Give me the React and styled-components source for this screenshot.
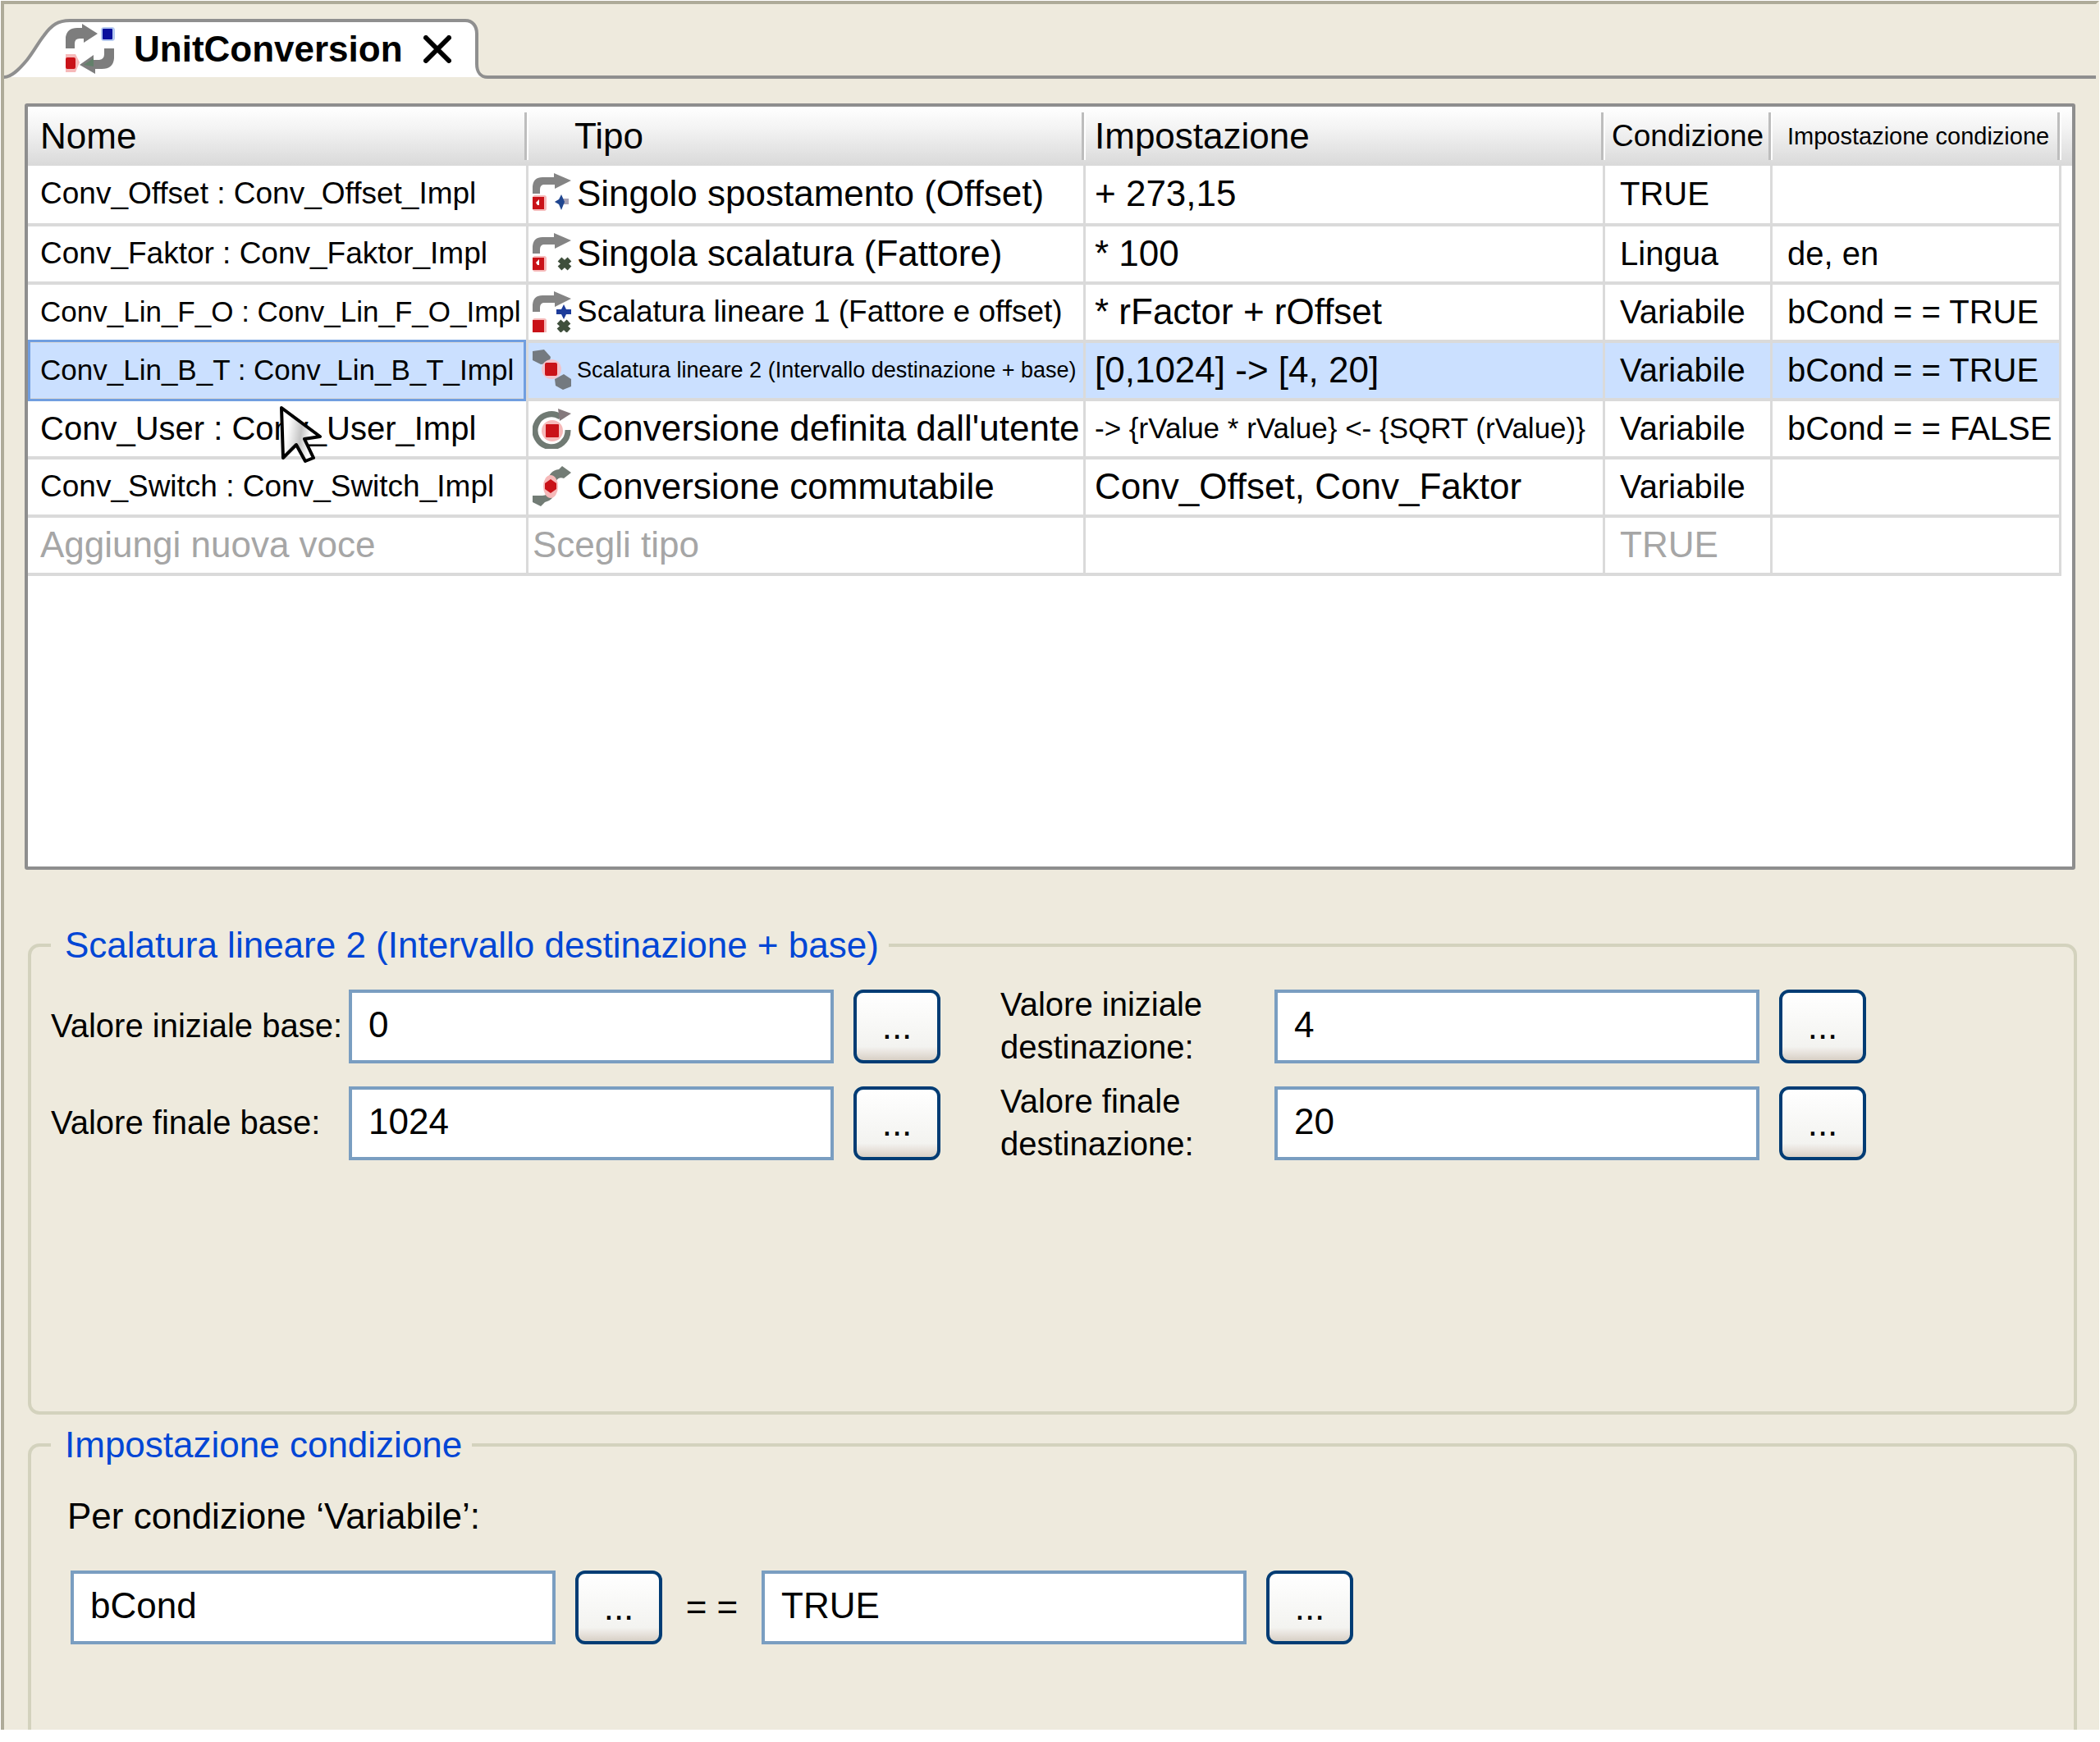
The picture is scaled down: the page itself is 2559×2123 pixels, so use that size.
import React, { useState } from "react";
import styled, { createGlobalStyle, css } from "styled-components";

const ROWS = [
  {
    name: "Conv_Offset : Conv_Offset_Impl",
    nameFit: "compact",
    icon: "offset",
    type: "Singolo spostamento (Offset)",
    setting: "+ 273,15",
    condition: "TRUE",
    conditionSetting: "",
  },
  {
    name: "Conv_Faktor : Conv_Faktor_Impl",
    nameFit: "compact",
    icon: "factor",
    type: "Singola scalatura (Fattore)",
    setting: "* 100",
    condition: "Lingua",
    conditionSetting: "de, en",
  },
  {
    name: "Conv_Lin_F_O : Conv_Lin_F_O_Impl",
    nameFit: "dense",
    icon: "linear1",
    type: "Scalatura lineare 1 (Fattore e offset)",
    typeFit: "compact",
    setting: "* rFactor + rOffset",
    condition: "Variabile",
    conditionSetting: "bCond = = TRUE",
  },
  {
    name: "Conv_Lin_B_T : Conv_Lin_B_T_Impl",
    nameFit: "dense",
    icon: "linear2",
    type: "Scalatura lineare 2 (Intervallo destinazione + base)",
    typeFit: "tiny",
    setting: "[0,1024] -> [4, 20]",
    condition: "Variabile",
    conditionSetting: "bCond = = TRUE",
  },
  {
    name: "Conv_User : Conv_User_Impl",
    nameFit: "medium",
    icon: "user",
    type: "Conversione definita dall'utente",
    setting: "-> {rValue * rValue} <- {SQRT (rValue)}",
    settingFit: "dense",
    condition: "Variabile",
    conditionSetting: "bCond = = FALSE",
  },
  {
    name: "Conv_Switch : Conv_Switch_Impl",
    nameFit: "compact",
    icon: "switch",
    type: "Conversione commutabile",
    setting: "Conv_Offset, Conv_Faktor",
    condition: "Variabile",
    conditionSetting: "",
  },
];

const BASE_FIELDS = [
  { id: "base-start", label: "Valore iniziale base:", value: "0", wide: true },
  { id: "target-start", label: "Valore iniziale destinazione:", value: "4" },
  { id: "base-end", label: "Valore finale base:", value: "1024", wide: true },
  { id: "target-end", label: "Valore finale destinazione:", value: "20" },
];

const GREY = "#848484";
const RED = "#c91218";
const PINK = "#f6b9b9";
const GREEN = "#3f4f3c";

const BendArrow = () => (
  <path
    d="M0 25 V16 Q1 5 12 5 H26 V0 L47 9 L27 19 V14 H13 Q9 15 9 20 V25 Z"
    fill={GREY}
  />
);

const RedBox = ({ y, mark }) => (
  <>
    <rect x="0" y={y - 2} width="17" height="19" rx="3" fill={PINK} />
    <rect x="0" y={y} width="14" height="15" fill={RED} />
    {mark && <path d="M4 36 L8 32 V39 H6 Z" fill="#fff" />}
  </>
);

const Plus = ({ x, y }) => (
  <path
    d={`M${x} ${y - 9} L${x + 3} ${y - 3} H${x + 9} V${y + 3} H${x + 3} L${x} ${y + 9} L${x - 3} ${y + 3} H${x - 9} V${y - 3} H${x - 3} Z`}
    fill="#1d3c9a"
  />
);

const Cross = ({ x, y }) => (
  <path
    d={`M${x - 6} ${y - 5} L${x + 6} ${y + 6} M${x + 6} ${y - 5} L${x - 6} ${y + 6}`}
    stroke={GREEN}
    strokeWidth="7"
  />
);

const TypeIcon = ({ kind }) => (
  <IconSvg viewBox="0 0 48 50" aria-hidden="true">
    {kind === "offset" && (
      <>
        <BendArrow />
        <RedBox y={29} mark />
        <path d="M27 35 L34 31 H44 V38 H34 Z" fill="#a7a2b5" />
        <path d="M35 26 L39 35 L35 45 L32 38 L27 35 L32 32 Z" fill="#1f4690" />
      </>
    )}
    {kind === "factor" && (
      <>
        <BendArrow />
        <RedBox y={30} mark />
        <Cross x={39} y={37} />
      </>
    )}
    {kind === "linear1" && (
      <>
        <BendArrow />
        <RedBox y={35} />
        <Plus x={38} y={25} />
        <Cross x={38} y={42} />
      </>
    )}
    {kind === "linear2" && (
      <>
        <path d="M0 2 L14 0 L22 9 L20 17 L10 18 L0 13 Z" fill="#747a80" />
        <path d="M27 36 L38 30 L47 36 V45 L37 49 L28 44 Z" fill="#747a80" />
        <circle cx="23" cy="24" r="12" fill="#f3c3cb" />
        <rect x="15" y="16" width="15" height="16" rx="2" fill={RED} />
      </>
    )}
    {kind === "user" && (
      <>
        <path
          d="M34 11 A20 20 0 1 0 43 27"
          fill="none"
          stroke="#707a73"
          strokeWidth="7"
        />
        <path d="M31 1 L47 7 L33 16 Z" fill="#84797c" />
        <circle cx="24" cy="28" r="13" fill={PINK} />
        <rect x="16" y="20" width="16" height="16" rx="1" fill={RED} />
      </>
    )}
    {kind === "switch" && (
      <>
        <path
          d="M18 20 Q20 5 32 4 L36 0 L47 8 L38 15 Q30 12 27 22 Z"
          fill="#727c75"
        />
        <path
          d="M27 29 Q27 41 15 44 L10 49 L0 44 V36 L12 36 Q19 36 19 28 Z"
          fill="#727c75"
        />
        <ellipse cx="22" cy="25" rx="9" ry="14" fill={PINK} />
        <path d="M22 16 L29 21 V28 L22 33 L15 28 V21 Z" fill={RED} />
      </>
    )}
  </IconSvg>
);

const ConversionLogo = () => (
  <LogoSvg viewBox="0 0 64 64" aria-hidden="true">
    <path
      d="M0 31 V17 Q2 6 14 6 H20 V1 L39 13 L22 24 V19 H17 Q11 19 11 25 V31 Z"
      fill="#7d7d7d"
    />
    <rect x="43" y="5" width="17" height="17" rx="4" fill="#b4c8f0" />
    <rect x="45" y="7" width="12" height="13" rx="1" fill="#0a109c" />
    <path d="M0 38 H12 L17 48 L12 60 H0 Z" fill={PINK} />
    <rect x="0" y="42" width="12" height="14" rx="2" fill={RED} />
    <path
      d="M47 31 H59 V43 Q58 56 44 56 H36 V62 L17 51 L34 39 V45 H41 Q47 44 47 38 Z"
      fill="#7d7d7d"
    />
    <path d="M22 51 L34 43 V53 Z" fill="#62806a" />
  </LogoSvg>
);

export default function App() {
  const [selected, setSelected] = useState(3);

  return (
    <>
      <GlobalStyle />
      <Window>
        <TabStrip>
          <Tab>
            <TabShape viewBox="0 0 589 73" aria-hidden="true">
              <path
                d="M0 71 C9 71 18 62 28 50 C36 40 41 30 48 21 C58 7 66 2 80 2 H562 C571 2 576 9 576 18 V55 C576 65 581 71 589 71"
                fill="#fff"
                stroke="#8f8f8f"
                strokeWidth="4"
              />
            </TabShape>
            <ConversionLogo />
            <TabTitle>UnitConversion</TabTitle>
            <CloseButton type="button" aria-label="Chiudi">
              <svg width="34" height="34" viewBox="0 0 34 34">
                <path
                  d="M3 3 L31 31 M31 3 L3 31"
                  stroke="#000"
                  strokeWidth="6"
                  strokeLinecap="round"
                />
              </svg>
            </CloseButton>
          </Tab>
          <StripLine />
        </TabStrip>

        <TablePanel>
          <Table>
            <colgroup>
              <Col $w={610} />
              <Col $w={679} />
              <Col $w={633} />
              <Col $w={204} />
              <col />
              <Col $w={13} />
            </colgroup>
            <thead>
              <tr>
                <Th $pad={15}>Nome</Th>
                <Th $pad={56}>Tipo</Th>
                <Th $pad={11}>Impostazione</Th>
                <Th $pad={8} $fit="compact">
                  Condizione
                </Th>
                <Th $pad={18} $fit="small">
                  Impostazione condizione
                </Th>
                <EndTh />
              </tr>
            </thead>
            <tbody>
              {ROWS.map((row, i) => (
                <Row
                  key={row.name}
                  $selected={i === selected}
                  onClick={() => setSelected(i)}
                >
                  <Td $pad={15} $fit={row.nameFit} $focus={i === selected}>
                    {row.name}
                  </Td>
                  <Td $pad={5} $fit={row.typeFit}>
                    <TypeCell>
                      <TypeIcon kind={row.icon} />
                      {row.type}
                    </TypeCell>
                  </Td>
                  <Td $pad={11} $fit={row.settingFit}>
                    {row.setting}
                  </Td>
                  <Td $pad={18} $fit="medium">
                    {row.condition}
                  </Td>
                  <Td $pad={18} $fit="medium">
                    {row.conditionSetting}
                  </Td>
                  <EndTd />
                </Row>
              ))}
              <Row $muted>
                <Td $pad={15}>Aggiungi nuova voce</Td>
                <Td $pad={5}>Scegli tipo</Td>
                <Td $pad={11} />
                <Td $pad={18}>TRUE</Td>
                <Td $pad={18} />
                <EndTd />
              </Row>
            </tbody>
          </Table>
          <Pointer viewBox="0 0 56 72" aria-hidden="true">
            <defs>
              <linearGradient id="pointerFill" x1="0" y1="0.4" x2="1" y2="0.6">
                <stop offset="0.15" stopColor="#fff" />
                <stop offset="0.5" stopColor="#c4c4c4" />
                <stop offset="0.75" stopColor="#fff" />
              </linearGradient>
            </defs>
            <path
              d="M3 4 L50 39 L31 42 L42 65 L32 69 L21 49 L5 65 Z"
              fill="url(#pointerFill)"
              stroke="#000"
              strokeWidth="4"
              strokeLinejoin="round"
            />
          </Pointer>
        </TablePanel>

        <Group $tall>
          <Legend>Scalatura lineare 2 (Intervallo destinazione + base)</Legend>
          <FieldGrid>
            {BASE_FIELDS.map((field) => (
              <Field key={field.id}>
                <Label htmlFor={field.id} $wide={field.wide}>
                  {field.label}
                </Label>
                <TextInput id={field.id} defaultValue={field.value} />
                <MoreButton type="button">...</MoreButton>
              </Field>
            ))}
          </FieldGrid>
        </Group>

        <Group $open>
          <Legend>Impostazione condizione</Legend>
          <Hint>Per condizione ‘Variabile’:</Hint>
          <ConditionRow>
            <TextInput defaultValue="bCond" aria-label="Variabile" />
            <MoreButton type="button">...</MoreButton>
            <Equals>= =</Equals>
            <TextInput defaultValue="TRUE" aria-label="Valore" />
            <MoreButton type="button">...</MoreButton>
          </ConditionRow>
        </Group>
      </Window>
    </>
  );
}

const GlobalStyle = createGlobalStyle`
  * {
    box-sizing: border-box;
  }

  body {
    margin: 0;
    background: #fff;
    color: #000;
    font-family: "Liberation Sans", Arial, sans-serif;
    font-size: 44px;
    line-height: 50px;
  }
`;

// smaller text for cells whose content is longer than the column
const fits = {
  medium: css`
    font-size: 40px;
  `,
  compact: css`
    font-size: 37px;
  `,
  dense: css`
    font-size: 35px;
  `,
  small: css`
    font-size: 29px;
  `,
  tiny: css`
    font-size: 27px;
  `,
};

const Window = styled.main`
  display: flex;
  flex-direction: column;
  min-height: calc(100vh - 16px);
  margin: 1px 1px 15px;
  border: 4px solid #aeab99;
  border-right-color: #eeeadd;
  border-bottom: none;
  background: #eeeadd;
`;

const TabStrip = styled.div`
  display: flex;
  align-items: flex-end;
  padding-top: 18px;
`;

const Tab = styled.div`
  position: relative;
  display: flex;
  align-items: center;
  width: 589px;
  height: 73px;
  padding-left: 75px;
`;

const TabShape = styled.svg`
  position: absolute;
  inset: 0;
  width: 100%;
  height: 100%;
`;

const LogoSvg = styled.svg`
  position: relative;
  width: 64px;
  height: 64px;
`;

const TabTitle = styled.span`
  position: relative;
  margin: 0 25px 0 19px;
  font-weight: bold;
`;

const CloseButton = styled.button`
  position: relative;
  display: flex;
  padding: 0;
  border: none;
  background: none;
  cursor: pointer;
`;

const StripLine = styled.div`
  flex: 1;
  height: 4px;
  background: #8f8f8f;
`;

const TablePanel = styled.section`
  position: relative;
  min-height: 934px;
  margin: 30px 25px 0;
  border: 4px solid #8e8e8e;
  border-radius: 3px;
  background: #fff;
`;

const Table = styled.table`
  width: 100%;
  table-layout: fixed;
  border-collapse: separate;
  border-spacing: 0;
  white-space: nowrap;

  thead {
    background: linear-gradient(#fff, #f4f4f4 35%, #d9d9d9);
  }

  tbody tr:first-child td {
    height: 74px;
  }
`;

const Col = styled.col`
  width: ${(props) => props.$w}px;
`;

const Th = styled.th`
  height: 72px;
  padding: 0 0 0 ${(props) => props.$pad}px;
  background:
    linear-gradient(#bdbdbd, #bdbdbd) right 2px center / 3px 58px no-repeat,
    linear-gradient(#fff, #fff) right 0 center / 2px 58px no-repeat;
  font-weight: normal;
  text-align: left;
  ${(props) => fits[props.$fit]}
`;

const EndTh = styled.td`
  padding: 0;
`;

const Td = styled.td`
  position: relative;
  height: 71px;
  padding: 0 0 2px ${(props) => props.$pad}px;
  border-right: 3px solid #dadada;
  border-bottom: 4px solid #dadada;
  ${(props) => fits[props.$fit]}

  ${(props) =>
    props.$focus &&
    css`
      &::after {
        content: "";
        position: absolute;
        inset: -4px 0 -4px 0;
        border: 3px solid #709ee0;
      }
    `}
`;

const EndTd = styled.td`
  padding: 0;
  background: #fff;
`;

const Row = styled.tr`
  background: ${(props) => (props.$selected ? "#cbe0ff" : "#fff")};
  color: ${(props) => (props.$muted ? "#a6a6a6" : "#000")};
`;

const TypeCell = styled.div`
  display: flex;
  align-items: center;
  gap: 6px;
`;

const IconSvg = styled.svg`
  flex: none;
  width: 48px;
  height: 50px;
`;

const Pointer = styled.svg`
  position: absolute;
  top: 363px;
  left: 306px;
  width: 56px;
  height: 72px;
`;

const Group = styled.fieldset`
  min-width: 0;
  min-height: ${(props) => (props.$tall ? "597px" : "0")};
  margin: ${(props) => (props.$tall ? "67px" : "12px")} 23px 0 29px;
  padding: 0 24px;
  border: 4px solid #d3d2bd;
  border-radius: 14px;

  ${(props) =>
    props.$open &&
    css`
      flex: 1;
      border-bottom: none;
      border-radius: 14px 14px 0 0;
    `}
`;

const Legend = styled.legend`
  padding: 0 12px 0 17px;
  color: #0046d5;
`;

const FieldGrid = styled.div`
  display: grid;
  grid-template-columns: max-content max-content;
  gap: 14px 73px;
  padding-top: 22px;
`;

const Field = styled.div`
  display: flex;
  align-items: center;
  height: 104px;
`;

const Label = styled.label`
  width: ${(props) => (props.$wide ? 363 : 334)}px;
  padding-right: ${(props) => (props.$wide ? 0 : 60)}px;
  padding-bottom: 2px;
  font-size: 40px;
  line-height: 52px;
`;

const TextInput = styled.input`
  width: 591px;
  height: 90px;
  padding: 0 20px 5px;
  border: 4px solid #7a9ec1;
  border-radius: 0;
  outline: none;
  background: #fff;
  color: #000;
  font: inherit;
`;

const MoreButton = styled.button`
  width: 106px;
  height: 90px;
  margin-left: 24px;
  padding: 0;
  border: 4px solid #003c74;
  border-radius: 12px;
  background: linear-gradient(#fff, #f3f3f0 80%, #ece8e3 86%, #d8d0c6);
  color: #000;
  font: inherit;
  cursor: pointer;
`;

const Hint = styled.p`
  margin: 0;
  padding: 37px 20px 0;
`;

const ConditionRow = styled.div`
  display: flex;
  align-items: center;
  padding: 41px 24px 0;
`;

const Equals = styled.span`
  width: 121px;
  text-align: center;
`;
